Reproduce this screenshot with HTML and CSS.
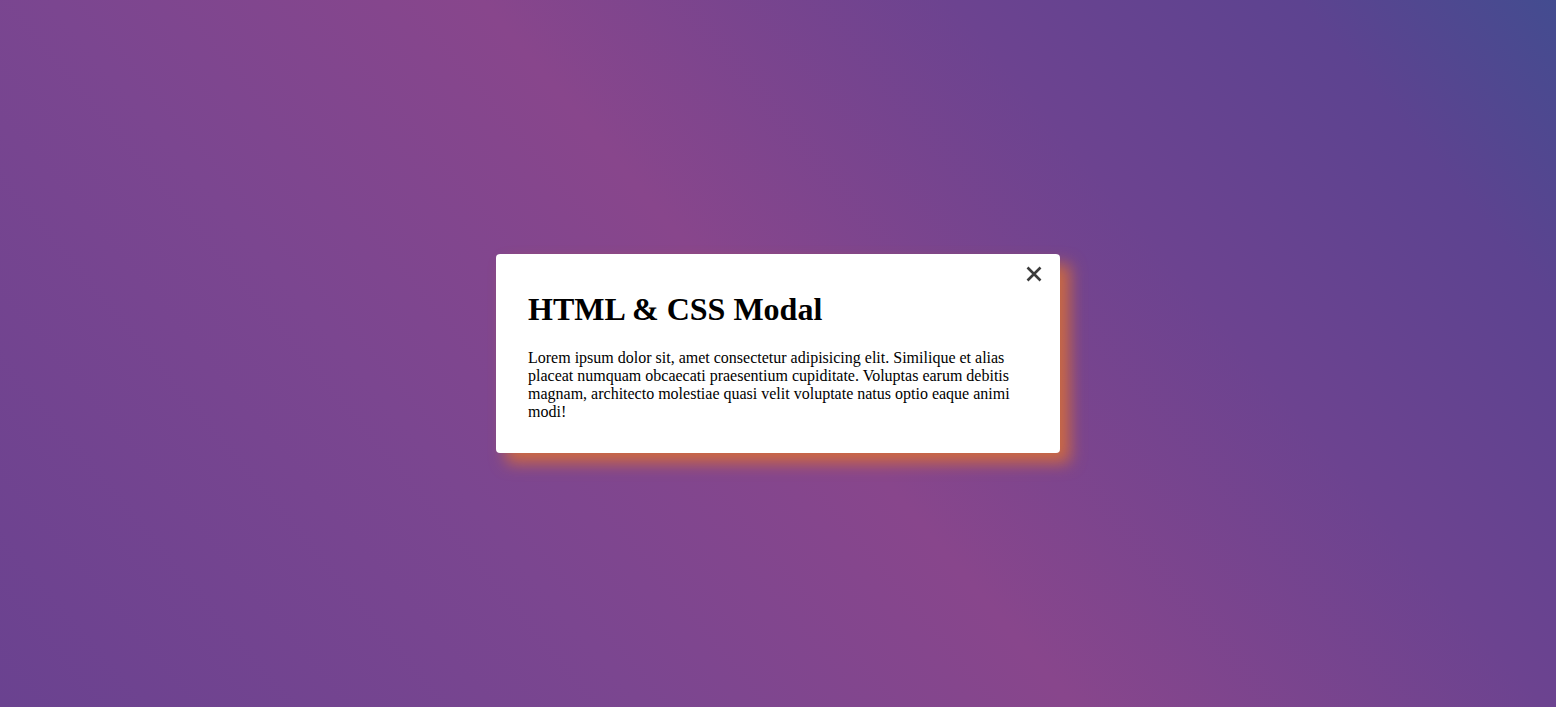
FILE: index.html
```html
<!DOCTYPE html>
<html lang="en">
<head>
<meta charset="utf-8">
<title>HTML &amp; CSS Modal</title>
<link rel="stylesheet" href="styles.css">
</head>
<body>
  <div class="modal">
    <button class="modal-close" aria-label="Close">
      <svg viewBox="0 0 16 16" width="16" height="16" aria-hidden="true">
        <path d="M1.5 1.5 L14.5 14.5 M14.5 1.5 L1.5 14.5" stroke="#3c3c3c" stroke-width="2.6" stroke-linecap="butt" fill="none"/>
      </svg>
    </button>
    <h1 class="modal-title">HTML &amp; CSS Modal</h1>
    <p class="modal-text">Lorem ipsum dolor sit, amet consectetur adipisicing elit. Similique et alias placeat numquam obcaecati praesentium cupiditate. Voluptas earum debitis magnam, architecto molestiae quasi velit voluptate natus optio eaque animi modi!</p>
  </div>
</body>
</html>
```

FILE: styles.css
```css
html, body {
  height: 100%;
}

body {
  margin: 0;
  min-height: 100vh;
  display: flex;
  align-items: center;
  justify-content: center;
  font-family: "Liberation Serif", "Times New Roman", serif;
  background: linear-gradient(50deg, #6a4290 0%, #7b4690 30%, #88468c 50%, #6c4390 72%, #5d4390 88%, #434c90 100%);
}

.modal {
  position: relative;
  width: 500px;
  padding: 16px 32px;
  background: #fff;
  border-radius: 4px;
  box-shadow: 10px 10px 16px rgba(232, 118, 40, 0.75);
  color: #000;
}

.modal-title {
  font-size: 32px;
  font-weight: bold;
  margin: 21.44px 0;
}

.modal-text {
  font-size: 16px;
  margin: 16px 0;
}

.modal-close {
  position: absolute;
  top: 12px;
  right: 18px;
  width: 16px;
  height: 16px;
  padding: 0;
  border: 0;
  background: none;
  cursor: pointer;
  display: flex;
}
```
